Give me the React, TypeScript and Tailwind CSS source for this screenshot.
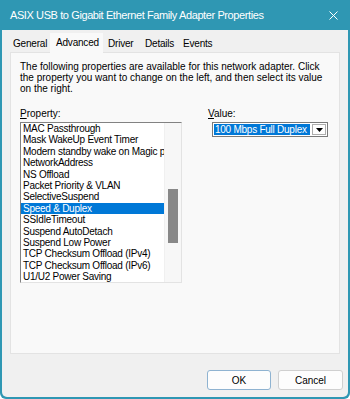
const PROPERTIES = [
  'MAC Passthrough',
  'Mask WakeUp Event Timer',
  'Modern standby wake on Magic packet',
  'NetworkAddress',
  'NS Offload',
  'Packet Priority & VLAN',
  'SelectiveSuspend',
  'Speed & Duplex',
  'SSIdleTimeout',
  'Suspend AutoDetach',
  'Suspend Low Power',
  'TCP Checksum Offload (IPv4)',
  'TCP Checksum Offload (IPv6)',
  'U1/U2 Power Saving',
];

export default function App() {
  return (
    <div className="flex h-[399px] w-[350px] flex-col overflow-hidden rounded-b-[6px] bg-[#2f97b3] px-[2px] pb-[2px] font-['Liberation_Sans',Arial,sans-serif] text-black">
      {/* title bar */}
      <div className="flex h-[30px] shrink-0 items-center justify-between pl-[8px] pr-[10px] text-[11px] tracking-[-0.4px] text-white">
        <span>ASIX USB to Gigabit Ethernet Family Adapter Properties</span>
        <svg width="9" height="9" viewBox="0 0 9 9" className="stroke-white" strokeWidth="1">
          <path d="M0.5 0.5 L8.5 8.5 M8.5 0.5 L0.5 8.5" />
        </svg>
      </div>

      <div className="flex flex-1 flex-col rounded-b-[5px] bg-[#f0f0f0] px-[8px]">
        {/* tabs */}
        <div className="mt-[3px] flex h-[19px] items-end text-[10px] tracking-[-0.2px]">
          <div className="flex h-[17px] w-[40px] items-center pl-[3px]">General</div>
          <div className="relative z-10 -mb-px flex h-[20px] w-[53px] items-start bg-[#f9f9f9] pl-[6px] pt-[2px]">
            Advanced
          </div>
          <div className="flex h-[17px] w-[37px] items-center pl-[5px]">Driver</div>
          <div className="flex h-[17px] w-[38px] items-center pl-[5px]">Details</div>
          <div className="flex h-[17px] items-center pl-[5px]">Events</div>
        </div>

        {/* panel */}
        <div className="h-[302px] border border-[#e3e3e3] bg-[#f9f9f9] px-[9px] pt-[8px]">
          <p className="whitespace-nowrap text-[10px] leading-[11px]">
            The following properties are available for this network adapter. Click
            <br />
            the property you want to change on the left, and then select its value
            <br />
            on the right.
          </p>

          <div className="mt-[14px] flex">
            {/* property list */}
            <div className="w-[188px]">
              <div className="text-[10px] leading-[11px]">
                <span className="underline">P</span>roperty:
              </div>
              <div className="mt-[3px] flex h-[161px] w-[162px] border border-t-[#828282] border-l-[#828282] border-r-[#e3e3e3] border-b-[#e3e3e3] bg-white">
                <div className="flex-1 overflow-hidden">
                  {PROPERTIES.map((p) => (
                    <div
                      key={p}
                      className={
                        p === 'Speed & Duplex'
                          ? 'h-[11.4px] whitespace-nowrap bg-[#0078d7] pl-[2px] text-[10px] leading-[11.4px] tracking-[-0.25px] text-white'
                          : 'h-[11.4px] whitespace-nowrap pl-[2px] text-[10px] leading-[11.4px] tracking-[-0.25px]'
                      }
                    >
                      {p}
                    </div>
                  ))}
                </div>
                <div className="w-[17px] shrink-0 border-l border-[#f0f0f0] bg-[#f7f7f7] px-[3px] pt-[66px]">
                  <div className="h-[54px] bg-[#888888]" />
                </div>
              </div>
            </div>

            {/* value */}
            <div>
              <div className="text-[10px] leading-[11px]">
                <span className="underline">V</span>alue:
              </div>
              <div className="ml-[4px] mt-[3px] flex h-[15px] w-[116px] items-center border border-[#7a7a7a] bg-white p-px">
                <div className="h-full flex-1 whitespace-nowrap bg-[#0078d7] pl-[1px] text-[10px] leading-[11px] tracking-[-0.25px] text-white">
                  100 Mbps Full Duplex
                </div>
                <div className="ml-[2px] flex h-full w-[14px] items-center justify-center border border-[#adadad] bg-white">
                  <svg width="7" height="4" viewBox="0 0 7 4">
                    <path d="M0 0 H7 L3.5 4 Z" fill="#000" />
                  </svg>
                </div>
              </div>
            </div>
          </div>
        </div>

        {/* buttons */}
        <div className="-mr-[3px] mt-[16px] flex justify-end gap-[7px]">
          <button className="h-[20px] w-[64px] rounded-[3px] border border-[#8fb3d1] bg-[#fdfdfd] text-[10px]">
            OK
          </button>
          <button className="h-[20px] w-[65px] rounded-[3px] border border-[#d0d0d0] bg-[#fdfdfd] text-[10px]">
            Cancel
          </button>
        </div>
      </div>
    </div>
  );
}
